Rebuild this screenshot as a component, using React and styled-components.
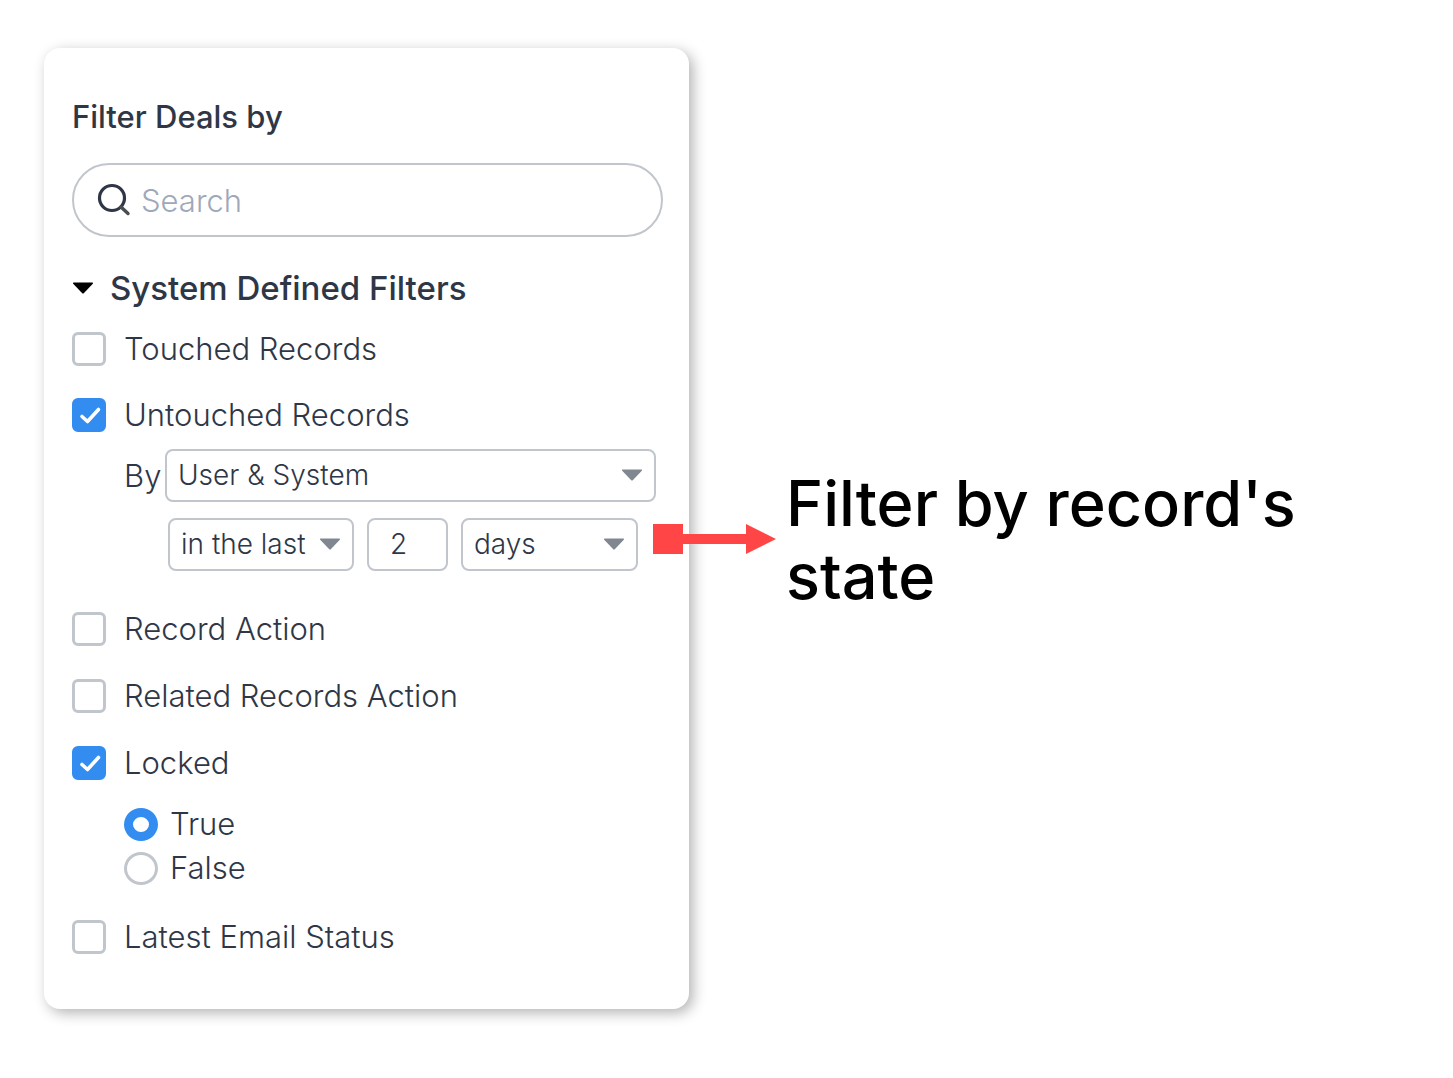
import { useState } from "react";
import styled, { createGlobalStyle } from "styled-components";

const colors = {
    text: "#2f3747",
    muted: "#9fa8b9",
    border: "#c0c6cc",
    blue: "#338cf0",
    caret: "#818791",
    red: "#ff4545",
};

const Caret = ({ color = colors.caret }) => (
    <CaretIcon viewBox="0 0 22 12" aria-hidden="true">
        <path d="M1.5 0.5H20.5Q21.5 0.8 20.8 1.8L12 11Q11 12 10 11L1.2 1.8Q0.5 0.8 1.5 0.5Z" fill={color} />
    </CaretIcon>
);

const CheckRow = ({ label, defaultChecked, $space }) => (
    <OptionLabel $space={$space} $gap={18}>
        <Checkbox type="checkbox" defaultChecked={defaultChecked} />
        {label}
    </OptionLabel>
);

const Dropdown = ({ label, options, $basis, $grow }) => (
    <DropdownStyled $basis={$basis} $grow={$grow}>
        <select aria-label={label}>
            {options.map((option) => (
                <option key={option}>{option}</option>
            ))}
        </select>
        <Caret />
    </DropdownStyled>
);

const App = () => {
    const [isOpen, setIsOpen] = useState(true);
    const [locked, setLocked] = useState("True");

    return (
        <Page>
            <GlobalStyle />
            <Panel>
                <Title>Filter Deals by</Title>
                <SearchBox>
                    <svg viewBox="0 0 34 34" aria-hidden="true">
                        <circle cx="15" cy="15" r="12.5" fill="none" stroke="#2f3747" strokeWidth="3.2" />
                        <path d="M24 24L31 30.5" stroke="#4a4d52" strokeWidth="3.4" strokeLinecap="round" />
                    </svg>
                    <input type="search" placeholder="Search" aria-label="Search filters" />
                </SearchBox>

                <SectionTitle>
                    <button aria-expanded={isOpen} onClick={() => setIsOpen(!isOpen)}>
                        <Caret color="#000" />
                        System Defined Filters
                    </button>
                </SectionTitle>

                {isOpen && (
                    <>
                        <CheckRow label="Touched Records" $space={24} />
                        <CheckRow label="Untouched Records" defaultChecked $space={32} />
                        <Conditions>
                            <ConditionRow>
                                <ByText>By</ByText>
                                <Dropdown label="By" options={["User & System", "User", "System"]} $grow={1} $basis={200} />
                            </ConditionRow>
                            <ConditionRow $indent={44} $gap={13}>
                                <Dropdown label="Period" options={["in the last", "before"]} $basis={186} />
                                <NumberInput type="text" inputMode="numeric" defaultValue="2" aria-label="Amount" />
                                <Dropdown label="Unit" options={["days", "weeks", "months"]} $basis={177} />
                            </ConditionRow>
                        </Conditions>
                        <CheckRow label="Record Action" $space={41} />
                        <CheckRow label="Related Records Action" $space={33} />
                        <CheckRow label="Locked" defaultChecked $space={33} />
                        <RadioGroup role="radiogroup" aria-label="Locked">
                            {["True", "False"].map((value) => (
                                <OptionLabel key={value} $gap={12}>
                                    <Radio
                                        type="radio"
                                        name="locked"
                                        checked={locked === value}
                                        onChange={() => setLocked(value)}
                                    />
                                    {value}
                                </OptionLabel>
                            ))}
                        </RadioGroup>
                        <CheckRow label="Latest Email Status" $space={35} />
                    </>
                )}
            </Panel>

            <Callout>
                <svg viewBox="0 0 123 30" aria-hidden="true">
                    <path d="M0 0H30V10H93V0L123 15L93 30V20H30V30H0Z" fill={colors.red} />
                </svg>
                <p>Filter by record's state</p>
            </Callout>
        </Page>
    );
};

export default App;

const GlobalStyle = createGlobalStyle`
    * {
        box-sizing: border-box;
    }

    body {
        margin: 0;
        background: #fff;
        color: ${colors.text};
        font-family: Inter, "Liberation Sans", sans-serif;
        font-size: 31px;
        font-weight: 350;
    }

    button, input, select {
        font: inherit;
        color: inherit;
    }
`;

const Page = styled.main`
    display: flex;
    min-height: 100vh;
    align-items: flex-start;
    padding: 48px 44px;
`;

const Panel = styled.section`
    flex: 0 1 645px;
    padding: 49px 26px 55px 28px;
    border-radius: 16px;
    background: #fff;
    box-shadow: 4px 4px 14px rgba(0, 0, 0, 0.3);
`;

const Title = styled.h1`
    margin: 0;
    font-size: 31px;
    font-weight: 550;
    line-height: 40px;
`;

const SearchBox = styled.div`
    display: flex;
    align-items: center;
    height: 74px;
    margin-top: 26px;
    padding: 0 23px;
    gap: 10px;
    border: 2px solid ${colors.border};
    border-radius: 37px;

    svg {
        flex: none;
        width: 34px;
        height: 34px;
    }

    input {
        flex: 1;
        min-width: 0;
        padding: 0;
        border: 0;
        outline: 0;
        background: none;

        &::placeholder {
            color: ${colors.muted};
            opacity: 1;
        }
    }
`;

const SectionTitle = styled.h2`
    margin: 31px 0 0;
    font-size: 33px;
    font-weight: 550;
    line-height: 40px;

    button {
        display: flex;
        align-items: center;
        gap: 16px;
        padding: 0;
        border: 0;
        background: none;
        cursor: pointer;
    }
`;

const CaretIcon = styled.svg`
    flex: none;
    width: 22px;
    height: 12px;
`;

const OptionLabel = styled.label`
    display: flex;
    align-items: center;
    gap: ${({ $gap }) => $gap}px;
    margin-top: ${({ $space = 0 }) => $space}px;
    line-height: 34px;
`;

const Checkbox = styled.input`
    flex: none;
    appearance: none;
    width: 34px;
    height: 34px;
    margin: 0;
    border: 3px solid ${colors.border};
    border-radius: 6px;
    background: #fff;

    &:checked {
        border-color: ${colors.blue};
        background: ${colors.blue} url("data:image/svg+xml,%3Csvg xmlns='http://www.w3.org/2000/svg' viewBox='0 0 28 28'%3E%3Cpath d='M7 15.5L12.5 20.5L23.5 8.5' fill='none' stroke='white' stroke-width='3.6' stroke-linecap='round' stroke-linejoin='round'/%3E%3C/svg%3E") center / 28px 28px no-repeat;
    }
`;

const Radio = styled.input`
    flex: none;
    appearance: none;
    width: 34px;
    height: 33px;
    margin: 0;
    border: 3px solid ${colors.border};
    border-radius: 50%;
    background: #fff;

    &:checked {
        border: 9px solid ${colors.blue};
    }
`;

const Conditions = styled.div`
    display: flex;
    flex-direction: column;
    gap: 16px;
    margin: 17px 7px 0 52px;
`;

const ConditionRow = styled.div`
    display: flex;
    align-items: center;
    gap: ${({ $gap = 0 }) => $gap}px;
    margin-left: ${({ $indent = 0 }) => $indent}px;
`;

const ByText = styled.span`
    flex: 0 0 41px;
`;

const DropdownStyled = styled.div`
    position: relative;
    flex: ${({ $grow = 0 }) => $grow} 1 ${({ $basis }) => $basis}px;
    min-width: 0;

    select {
        display: block;
        width: 100%;
        height: 53px;
        padding: 0 36px 2px 11px;
        border: 2px solid ${colors.border};
        border-radius: 8px;
        background: #fff;
        appearance: none;
        font-size: 28px;
    }

    svg {
        position: absolute;
        top: 20px;
        right: 13px;
        pointer-events: none;
    }
`;

const NumberInput = styled.input`
    flex: 0 1 81px;
    min-width: 0;
    height: 53px;
    padding: 0 18px 2px 0;
    border: 2px solid ${colors.border};
    border-radius: 8px;
    background: #fff;
    font-size: 28px;
    text-align: center;
`;

const RadioGroup = styled.div`
    display: flex;
    flex-direction: column;
    gap: 10px;
    margin: 27px 0 0 52px;
`;

const Callout = styled.aside`
    position: relative;
    display: flex;
    flex: 1;
    align-items: center;
    align-self: center;
    gap: 10px;
    margin-left: -36px;

    svg {
        flex: none;
        width: 123px;
        height: 30px;
    }

    p {
        margin: 0;
        padding-top: 2px;
        max-width: 540px;
        color: #000;
        font-size: 63px;
        font-weight: 450;
        line-height: 73px;
    }
`;
